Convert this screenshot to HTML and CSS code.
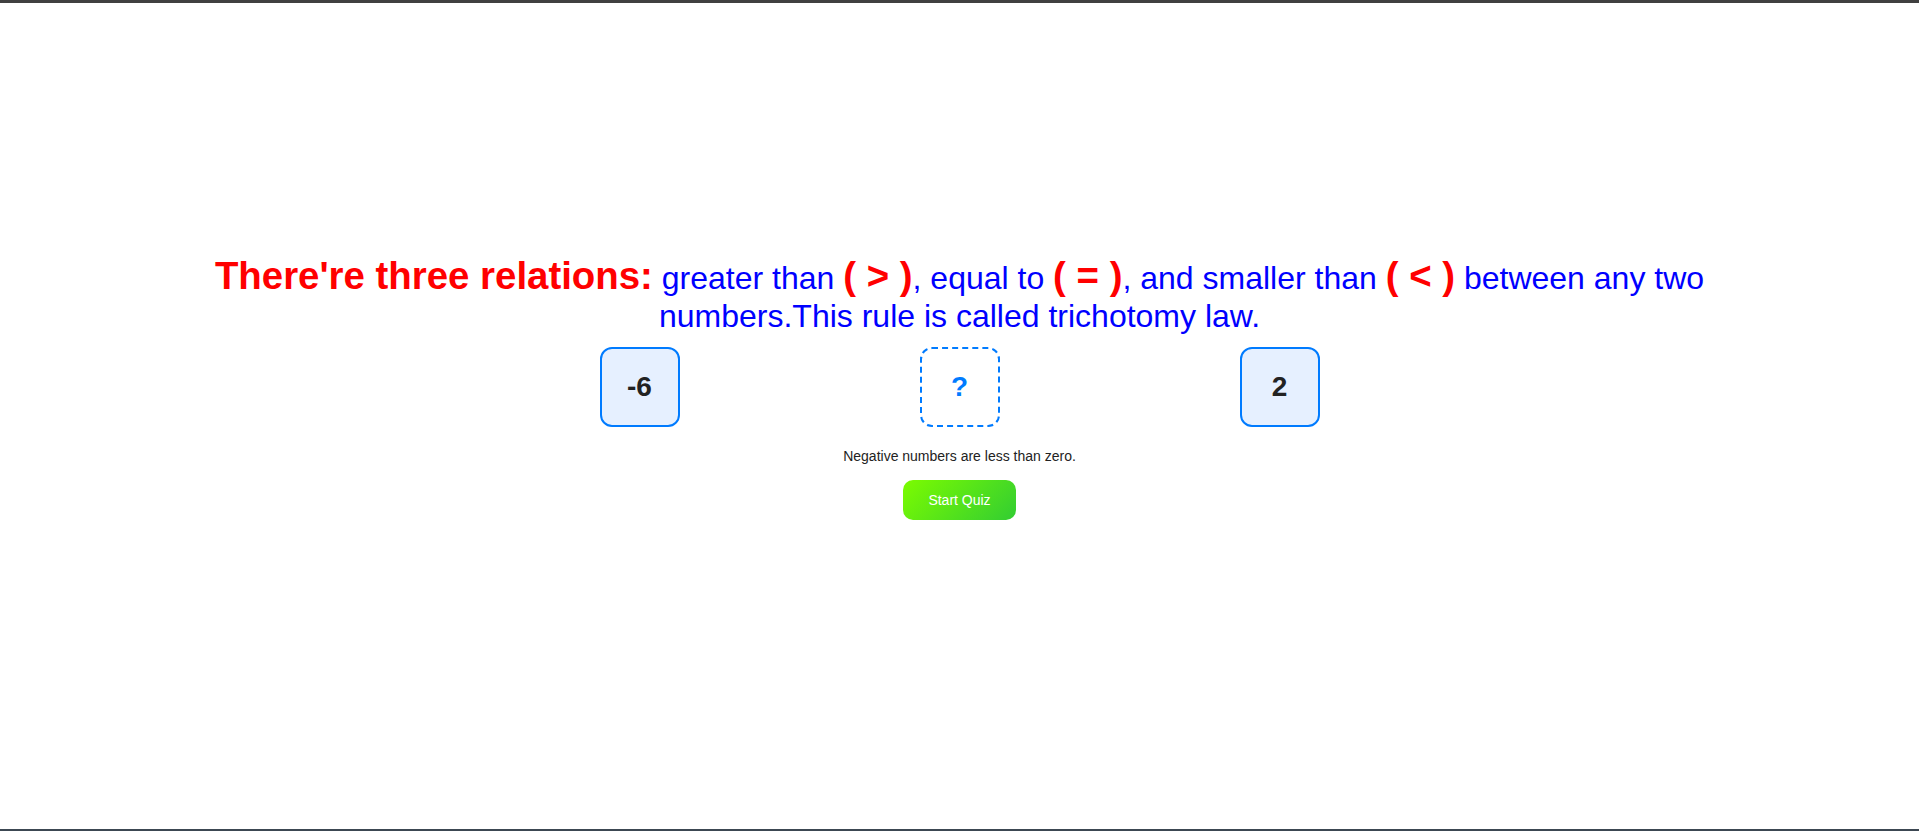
FILE: index.html
```html
<!DOCTYPE html>
<html lang="en">
<head>
  <meta charset="UTF-8" />
  <meta name="viewport" content="width=device-width, initial-scale=1.0" />
  <title>Trichotomy Law</title>
  <link rel="stylesheet" href="styles.css">
</head>
<body>
  <main class="lesson">
    <p class="rule">
      <span class="rule-title">There're three relations:</span>
      greater than <span class="sign">( &gt; )</span>, equal to <span class="sign">( = )</span>, and smaller than <span class="sign">( &lt; )</span> between any two numbers.This rule is called trichotomy law.
    </p>

    <div class="compare-row">
      <div class="num-box">-6</div>
      <div class="num-box slot">?</div>
      <div class="num-box">2</div>
    </div>

    <p class="hint">Negative numbers are less than zero.</p>

    <button class="start-btn">Start Quiz</button>
  </main>
</body>
</html>
```

FILE: styles.css
```css
html, body {
  height: 100%;
}

body {
  margin: 0;
  box-sizing: border-box;
  font-family: "Liberation Sans", Arial, sans-serif;
  background-color: #ffffff;
  color: #333;
  border-top: 3px solid #404040;
  border-bottom: 2px solid #3c4752;
}

.lesson {
  display: flex;
  flex-direction: column;
  align-items: center;
  padding-top: 251px;
}

.rule {
  max-width: 1520px;
  margin: 0;
  text-align: center;
  font-size: 32px;
  color: #0000ff;
}

.rule-title,
.sign {
  font-size: 1.2em;
  font-weight: bold;
  color: #ff0000;
}

.compare-row {
  display: flex;
  gap: 240px;
  margin-top: 12px;
}

.num-box {
  width: 80px;
  height: 80px;
  box-sizing: border-box;
  display: flex;
  align-items: center;
  justify-content: center;
  border: 2px solid #007bff;
  border-radius: 12px;
  background-color: #e6f0ff;
  font-size: 28px;
  font-weight: bold;
  color: #222;
}

.num-box.slot {
  border-style: dashed;
  background-color: transparent;
  color: #007bff;
}

.hint {
  margin: 21px 0 0;
  font-size: 14px;
  color: #222;
}

.start-btn {
  margin-top: 16px;
  padding: 12px 25px;
  border: none;
  border-radius: 10px;
  background: linear-gradient(135deg, #7cfc00, #32cd32);
  color: #ffffff;
  font-family: inherit;
  font-size: 14px;
  cursor: pointer;
}
```
